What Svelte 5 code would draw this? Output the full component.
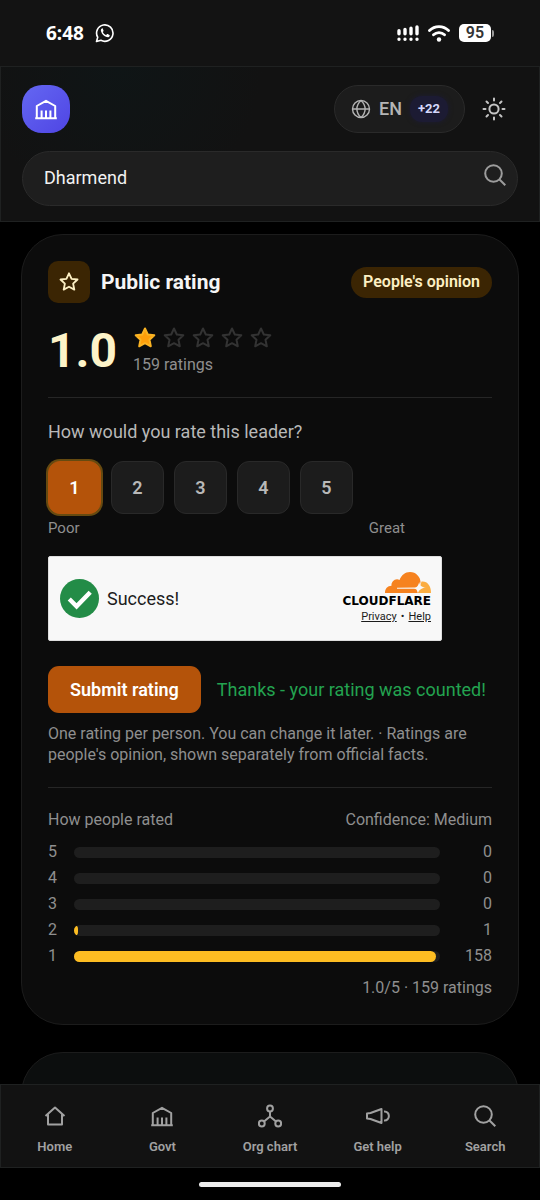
<script lang="ts">
	let query = $state('Dharmend');
	let selected = $state(1);

	const total = 159;
	const scores = [1, 2, 3, 4, 5];
	const starPath = 'M12 2.500l2.800 6 6.500.8-4.800 4.500 1.300 6.500L12 17.200l-5.800 3.100 1.300-6.500L2.700 9.300l6.500-.8z';

	const breakdown = [
		{ stars: 5, count: 0 },
		{ stars: 4, count: 0 },
		{ stars: 3, count: 0 },
		{ stars: 2, count: 1 },
		{ stars: 1, count: 158 }
	];

	// a score with votes always shows at least a sliver
	function barWidth(count: number) {
		if (count === 0) return 0;
		return Math.max(1, Math.floor((count / total) * 100));
	}

	const tabs = [
		{ id: 'home', label: 'Home' },
		{ id: 'govt', label: 'Govt' },
		{ id: 'org', label: 'Org chart' },
		{ id: 'help', label: 'Get help' },
		{ id: 'search', label: 'Search' }
	];
</script>

{#snippet building()}
	<path d="M2.800 21V9L12 3.800 21.200 9v12M1.200 21.300h21.600M7.600 21v-7.500M12 21v-7.500M16.400 21v-7.500" />
{/snippet}

{#snippet magnifier()}
	<circle cx="10.500" cy="10.500" r="8.300" />
	<path d="M16.500 16.500l5.800 5.800" />
{/snippet}

<div class="screen">
	<div class="status">
		<div class="status-side">
			<span class="time">6:48</span>
			<svg class="whatsapp" viewBox="0 0 20 20" aria-hidden="true">
				<path d="M1.500 18.500l1.200-4.300a8.200 8.200 0 1 1 3.200 3.100z" fill="none" stroke="currentColor" stroke-width="1.600" stroke-linejoin="round" />
				<path d="M6.900 5.400c-1 .6-1.300 1.700-.8 3 .9 2.700 2.800 4.700 5.600 5.700 1.300.4 2.500 0 3-1.100.2-.5.100-.8-.3-1l-1.700-.9c-.4-.2-.6-.1-.9.2l-.7.9c-1.500-.6-2.600-1.600-3.300-3.100l.6-.8c.2-.3.2-.5.100-.8l-.7-1.700c-.2-.5-.5-.6-.9-.4z" fill="currentColor" />
			</svg>
		</div>
		<div class="status-side right">
			<svg class="signal" viewBox="0 0 22 16" aria-hidden="true">
				<g stroke="currentColor" stroke-width="3.400" stroke-linecap="round">
					<path d="M2 5.800v3M8 4.500v4.300M14 3.200v5.600M20 2v6.800M2 14.200v0M8 14.200v0M14 14.200v0M20 14.200v0" />
				</g>
			</svg>
			<svg class="wifi" viewBox="0 0 22 17" aria-hidden="true">
				<path d="M1.500 5.500a13.500 13.500 0 0 1 19 0M5.500 9.800a8 8 0 0 1 11 0" fill="none" stroke="currentColor" stroke-width="2.800" stroke-linecap="round" />
				<circle cx="11" cy="14.500" r="2.200" fill="currentColor" />
			</svg>
			<div class="battery"><span class="level">95</span><span class="tip"></span></div>
		</div>
	</div>

	<header>
		<div class="topbar">
			<a class="logo" href="#home" aria-label="Home">
				<svg viewBox="0 0 24 24">{@render building()}</svg>
			</a>
			<div class="actions">
				<button class="lang">
					<svg viewBox="0 0 20 20" aria-hidden="true">
						<circle cx="10" cy="10" r="8.500" />
						<path d="M1.500 10h17M10 1.500c-5.500 5-5.500 12 0 17M10 1.500c5.500 5 5.500 12 0 17" />
					</svg>
					<span>EN</span>
					<span class="more">+22</span>
				</button>
				<button class="theme" aria-label="Toggle theme">
					<svg viewBox="0 0 24 24">
						<circle cx="12" cy="12" r="4.600" />
						<path d="M12 1.500v2M12 20.500v2M1.500 12h2M20.500 12h2M4.500 4.500L6 6M18 18l1.500 1.500M4.500 19.500L6 18M18 6l1.500-1.500" />
					</svg>
				</button>
			</div>
		</div>
		<form class="search" onsubmit={(e) => e.preventDefault()}>
			<input type="text" aria-label="Search" bind:value={query} />
			<button aria-label="Search"><svg viewBox="0 0 24 24">{@render magnifier()}</svg></button>
		</form>
	</header>

	<main>
		<section class="card">
			<div class="card-head">
				<span class="star-box"><svg viewBox="0 0 24 24"><path d={starPath} /></svg></span>
				<h2>Public rating</h2>
				<span class="badge">People's opinion</span>
			</div>

			<div class="summary">
				<strong>1.0</strong>
				<div class="summary-side">
					<div class="stars">
						{#each scores as n}
							<svg class:filled={n === 1} viewBox="0 0 24 24"><path d={starPath} /></svg>
						{/each}
					</div>
					<p>{total} ratings</p>
				</div>
			</div>

			<hr />

			<p class="question">How would you rate this leader?</p>
			<div class="scores">
				{#each scores as n}
					<button class:active={selected === n} aria-pressed={selected === n} onclick={() => (selected = n)}>{n}</button>
				{/each}
			</div>
			<div class="scale"><span>Poor</span><span>Great</span></div>

			<div class="captcha">
				<svg class="check" viewBox="0 0 40 40" aria-hidden="true">
					<circle cx="20" cy="20" r="20" fill="#238c47" />
					<path d="M9.500 20.500l7.500 7.500 14-14.500" fill="none" stroke="#fff" stroke-width="4.500" />
				</svg>
				<span class="success">Success!</span>
				<div class="brand">
					<svg viewBox="0 0 46 21" aria-hidden="true">
						<path d="M0 21c0-4.500 2.500-7 6.500-7.200C6 9.500 10.500 5.800 14.500 8 16.500 3 20 0 25 0c6 0 10.500 5 10.500 10L33 21z" fill="#f6821f" />
						<path d="M36.500 9.500c5.500-.8 9.500 4 9.500 11.500H33z" fill="#fbad41" />
						<path d="M12 15.700l18-.3c2.500-.2 3.500-2.500 4.200-5.400.8 3.500 2 5.200 6.800 5.700-4 .2-6 1.300-8.500 5.300-.2-2.800-1-4.300-3.500-4.300H12z" fill="#f8f8f8" />
					</svg>
					<span class="wordmark">CLOUDFLARE</span>
					<span class="legal"><a href="#privacy">Privacy</a><span>•</span><a href="#help">Help</a></span>
				</div>
			</div>

			<div class="submit-row">
				<button>Submit rating</button>
				<span>Thanks - your rating was counted!</span>
			</div>
			<p class="note">One rating per person. You can change it later. · Ratings are people's opinion, shown separately from official facts.</p>

			<hr />

			<div class="breakdown-head"><span>How people rated</span><span>Confidence: Medium</span></div>
			<div class="breakdown">
				{#each breakdown as row}
					<div class="row">
						<span>{row.stars}</span>
						<div class="track"><div class="fill" style="width: {barWidth(row.count)}%"></div></div>
						<span class="count">{row.count}</span>
					</div>
				{/each}
			</div>
			<p class="total">1.0/5 · {total} ratings</p>
		</section>

		<section class="card next"></section>
	</main>

	<nav>
		{#each tabs as tab}
			<a href="#{tab.id}">
				<svg viewBox="0 0 24 24" aria-hidden="true">
					{#if tab.id === 'home'}
						<path d="M2.500 12L12 3.500l9.500 8.500M5 10.500V20.500h14V10.500" />
					{:else if tab.id === 'govt'}
						{@render building()}
					{:else if tab.id === 'org'}
						<circle cx="12" cy="4.500" r="2.900" />
						<circle cx="3.800" cy="19.500" r="2.900" />
						<circle cx="20.200" cy="19.500" r="2.900" />
						<path d="M12 7.400v5.100M12 12.500l-6 5M12 12.500l6 5" />
					{:else if tab.id === 'help'}
						<path d="M1 9.500v5l3.500.500L15.500 19V5L4.500 9zM18 7.500c6.500-.500 6.500 9.500 0 9" />
					{:else}
						{@render magnifier()}
					{/if}
				</svg>
				<span>{tab.label}</span>
			</a>
		{/each}
	</nav>
	<div class="home-bar"><span></span></div>
</div>

<style>
	:global(body) {
		background: #000;
	}

	.screen {
		display: flex;
		flex-direction: column;
		height: 100vh;
		background: #000;
		color: #a1a1a1;
		font-family: Roboto, sans-serif;
		font-size: 16px;
		line-height: 20px;
	}

	h2, p {
		margin: 0;
	}

	button, input {
		padding: 0;
		border: 0;
		background: none;
		color: inherit;
		font: inherit;
	}

	button {
		cursor: pointer;
	}

	a {
		color: inherit;
		text-decoration: none;
	}

	svg {
		display: block;
		flex: none;
	}

	header svg, nav svg, .star-box svg, .stars svg {
		width: 24px;
		height: 24px;
		fill: none;
		stroke: currentColor;
		stroke-width: 2;
		stroke-linejoin: round;
	}

	/* status bar */
	.status {
		display: flex;
		flex: none;
		align-items: center;
		justify-content: space-between;
		height: 66px;
		padding: 0 46px;
		background: #131313;
		color: #fff;
	}

	.status-side {
		display: flex;
		align-items: center;
		gap: 11px;
	}

	.right {
		gap: 9px;
	}

	.time {
		font-family: "Noto Sans", sans-serif;
		font-size: 19px;
		font-weight: 700;
	}

	.whatsapp {
		width: 20px;
		height: 20px;
	}

	.signal {
		width: 22px;
		height: 16px;
	}

	.wifi {
		width: 22px;
		height: 17px;
	}

	.battery {
		display: flex;
		align-items: center;
		gap: 1px;
	}

	.level {
		width: 32px;
		border-radius: 5px;
		background: #fff;
		color: #333;
		font-size: 16px;
		font-weight: 600;
		line-height: 18px;
		text-align: center;
	}

	.tip {
		width: 2px;
		height: 7px;
		border-radius: 0 2px 2px 0;
		background: #999;
	}

	/* header */
	header {
		flex: none;
		padding: 18px 21px 15px;
		border: 1px solid #1f2121;
		background: radial-gradient(circle at 22% 0, #0f1516, #121212 32%);
	}

	.topbar {
		display: flex;
		justify-content: space-between;
		margin-bottom: 18px;
	}

	.logo {
		display: grid;
		place-items: center;
		width: 48px;
		height: 48px;
		border-radius: 20px;
		background: linear-gradient(135deg, #6467f2, #4f45e4);
		color: #fff;
	}

	.actions {
		display: flex;
		gap: 5px;
	}

	.lang {
		display: flex;
		align-items: center;
		gap: 8px;
		height: 48px;
		padding: 0 16px;
		border: 1px solid #2a2a2a;
		border-radius: 24px;
		background: #1c1c1c;
		color: #b5b5b5;
		font-size: 18px;
		font-weight: 500;
	}

	.lang svg {
		width: 20px;
		height: 20px;
		stroke-width: 1.4;
	}

	.more {
		padding: 3px 8px;
		border-radius: 12px;
		background: #1c1b33;
		box-shadow: 0 0 5px #1c1b33;
		color: #d5d8fb;
		font-size: 13px;
		font-weight: 700;
	}

	.theme {
		display: grid;
		place-items: center;
		width: 48px;
		color: #c4c4c4;
	}

	.theme svg {
		stroke-linecap: round;
	}

	.search {
		display: flex;
		align-items: flex-start;
		height: 53px;
		border: 1px solid #2a2a2a;
		border-radius: 28px;
		background: #1e1e1e;
	}

	.search input {
		flex: 1;
		min-width: 0;
		height: 50px;
		padding-left: 21px;
		outline: none;
		color: #f2f2f2;
		font-size: 18px;
	}

	.search button {
		display: grid;
		place-items: center;
		width: 44px;
		height: 46px;
		color: #9c9c9c;
	}

	/* cards */
	main {
		flex: 1;
		min-height: 0;
		padding: 12px 21px 0;
		overflow: hidden;
	}

	.card {
		padding: 26px;
		border: 1px solid #1c1c1c;
		border-radius: 42px;
		background: #0c0c0c;
	}

	.next {
		margin-top: 27px;
		height: 60px;
		background: #0c0e0e;
	}

	.card-head {
		display: flex;
		align-items: center;
		gap: 11px;
		margin-bottom: 23px;
	}

	.star-box {
		display: grid;
		place-items: center;
		width: 42px;
		height: 42px;
		border-radius: 10px;
		background: #3b2503;
		color: #fdf0c4;
	}

	.star-box svg {
		width: 22px;
		height: 22px;
	}

	h2 {
		flex: 1;
		color: #f5f5f5;
		font-size: 21px;
		font-weight: 700;
		line-height: 24px;
	}

	.badge {
		padding: 5px 12px 6px;
		border-radius: 16px;
		background: #3b2503;
		color: #fdf0c4;
		font-weight: 600;
	}

	.summary {
		display: flex;
		align-items: center;
		gap: 16px;
	}

	.summary strong {
		color: #fdf3c8;
		font-size: 48px;
		font-weight: 700;
		line-height: 48px;
	}

	.summary-side {
		display: flex;
		flex-direction: column;
		gap: 5px;
	}

	.stars {
		display: flex;
		gap: 5px;
		color: #333;
	}

	.stars .filled {
		fill: #ff9f0a;
		stroke: #fbb423;
	}

	hr {
		width: 100%;
		height: 1px;
		margin: 22px 0;
		border: 0;
		background: #262626;
	}

	.question {
		margin-bottom: 17px;
		color: #b8b8b8;
		font-size: 18px;
		line-height: 24px;
	}

	.scores {
		display: flex;
		gap: 10px;
		margin-bottom: 4px;
	}

	.scores button {
		width: 53px;
		height: 53px;
		border: 1px solid #292929;
		border-radius: 12px;
		background: #1c1c1c;
		color: #b8b8b8;
		font-size: 18px;
		font-weight: 600;
	}

	.scores .active {
		border-color: #b4530a;
		background: #b4530a;
		box-shadow: 0 0 0 2px #664a10;
		color: #fff;
	}

	.scale {
		display: flex;
		justify-content: space-between;
		max-width: 357px;
		margin-bottom: 18px;
		color: #8f8f8f;
		font-size: 15px;
	}

	.captcha {
		display: flex;
		align-items: center;
		gap: 8px;
		box-sizing: border-box;
		max-width: 394px;
		height: 85px;
		margin-bottom: 25px;
		padding: 0 10px 0 11px;
		border: 1px solid #dedede;
		border-radius: 2px;
		background: #f8f8f8;
		color: #1c1c1c;
	}

	.check {
		width: 39px;
		height: 39px;
	}

	.success {
		flex: 1;
		font-size: 18px;
	}

	.brand {
		display: flex;
		flex-direction: column;
		align-items: flex-end;
	}

	.brand svg {
		width: 46px;
		height: 21px;
	}

	.wordmark {
		color: #000;
		font-family: "DejaVu Sans", sans-serif;
		font-size: 12px;
		font-weight: 700;
		line-height: 16px;
	}

	.legal {
		display: flex;
		gap: 4px;
		font-size: 11px;
		line-height: 16px;
	}

	.legal a {
		text-decoration: underline;
	}

	.submit-row {
		display: flex;
		align-items: center;
		gap: 16px;
		margin-bottom: 10px;
		color: #23a350;
		font-size: 18px;
		white-space: nowrap;
	}

	.submit-row button {
		height: 47px;
		padding: 0 22px;
		border-radius: 11px;
		background: #b4530a;
		color: #fff;
		font-weight: 600;
	}

	.note {
		color: #8f8f8f;
		line-height: 21px;
	}

	.breakdown-head {
		display: flex;
		justify-content: space-between;
		margin-bottom: 12px;
	}

	.breakdown-head, .breakdown, .total, .summary p {
		color: #8f8f8f;
	}

	.breakdown {
		display: grid;
		gap: 6px;
		margin-bottom: 12px;
	}

	.row {
		display: grid;
		grid-template-columns: 16px 1fr 42px;
		gap: 10px;
		align-items: center;
	}

	.track {
		height: 11px;
		border-radius: 6px;
		background: #1e1e1e;
		overflow: hidden;
	}

	.fill {
		height: 100%;
		border-radius: 0 6px 6px 0;
		background: #fdbd22;
	}

	.count, .total {
		text-align: right;
	}

	/* bottom navigation */
	nav {
		display: grid;
		flex: none;
		grid-template-columns: repeat(5, 1fr);
		height: 82px;
		border: 1px solid #1f2121;
		background: #121212;
	}

	nav a {
		display: flex;
		flex-direction: column;
		align-items: center;
		gap: 9px;
		padding-top: 19px;
		font-size: 13px;
		font-weight: 600;
	}

	.home-bar {
		display: grid;
		flex: none;
		place-items: center;
		height: 32px;
	}

	.home-bar span {
		width: 142px;
		height: 5px;
		border-radius: 3px;
		background: #ececec;
	}
</style>
